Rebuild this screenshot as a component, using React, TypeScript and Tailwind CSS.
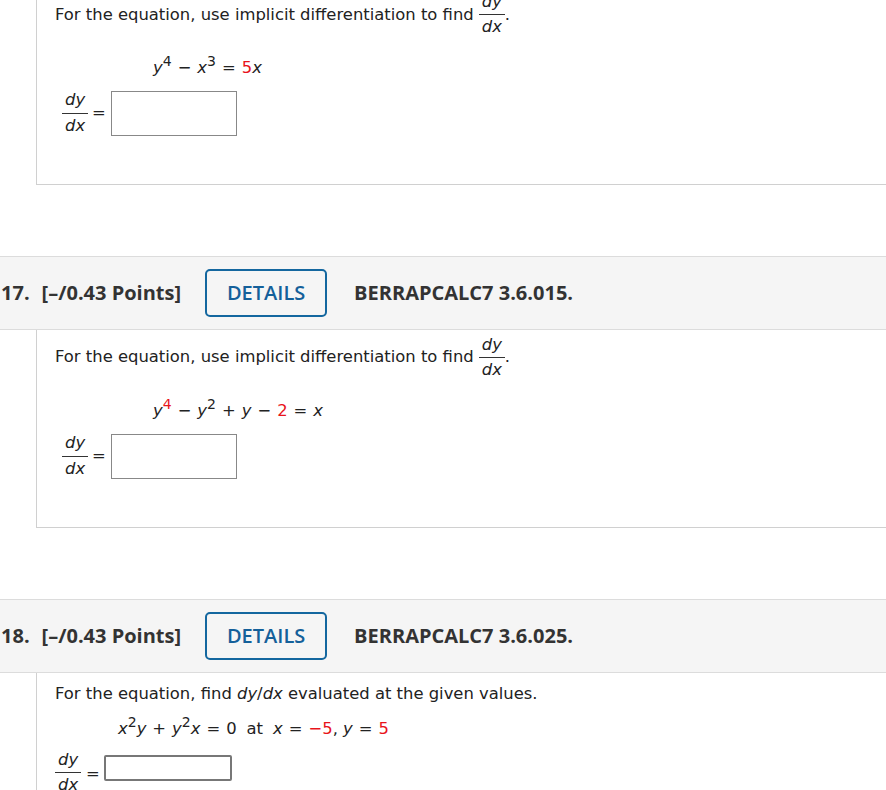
import React from 'react';

const red = 'text-[#e8141b]';

function Frac({ num, den }: { num: string; den: string }) {
  return (
    <span className="inline-flex flex-col items-center align-middle leading-none">
      <span className="px-[3px] pb-[4px] italic">{num}</span>
      <span className="h-px w-full bg-[#333]" />
      <span className="px-[3px] pt-[4px] italic">{den}</span>
    </span>
  );
}

function Op({ children }: { children: React.ReactNode }) {
  return <span className="mx-[6px]">{children}</span>;
}

function Sup({ children, className }: { children: React.ReactNode; className?: string }) {
  return <sup className={'text-[14px] ' + (className ?? '')}>{children}</sup>;
}

function Header({ num, code }: { num: string; code: string }) {
  return (
    <div className="flex h-[74px] items-center border-y border-[#dcdcdc] bg-[#f5f5f5] pl-[1px] font-['Open_Sans',sans-serif] text-[20px] font-bold text-[#333]">
      <span>{num}.</span>
      <span className="ml-[12px]">[–/0.43 Points]</span>
      <button className="ml-[24px] h-[48px] w-[122px] rounded-[5px] border-2 border-[#14679f] bg-transparent font-semibold text-[#14609a]">
        DETAILS
      </button>
      <span className="ml-[27px]">{code}</span>
    </div>
  );
}

function Answer({ small }: { small?: boolean }) {
  return (
    <div className={small ? 'flex items-start' : 'ml-[7px] flex items-center'}>
      <Frac num="dy" den="dx" />
      <span className={small ? 'ml-[5px] mt-[10px]' : 'ml-[4px]'}>=</span>
      {small ? (
        <span className="ml-[4px] mt-[3px] h-[26px] w-[128px] rounded-[2px] border-2 border-[#777] bg-white" />
      ) : (
        <span className="ml-[5px] h-[45px] w-[126px] border border-[#888] bg-white" />
      )}
    </div>
  );
}

function Card({ children, last }: { children: React.ReactNode; last?: boolean }) {
  return (
    <div
      className={
        last
          ? 'ml-[36px] border-l border-[#d0d0d0] pl-[18px] pt-[9px]'
          : 'ml-[36px] border-b border-l border-[#d0d0d0] pb-[48px] pl-[18px] pt-[7px]'
      }
    >
      {children}
    </div>
  );
}

function Intro() {
  return (
    <p className="flex items-center">
      <span>For the equation, use implicit differentiation to find</span>
      <span className="ml-[5px]">
        <Frac num="dy" den="dx" />
      </span>
      <span>.</span>
    </p>
  );
}

export default function App() {
  return (
    <div className="h-[790px] w-[886px] overflow-hidden bg-white font-['DejaVu_Sans',Verdana,sans-serif] text-[16.4px] text-[#222]">
      <div className="-mt-[13px]">
        <Card>
          <Intro />
          <div className="ml-[98px] mt-[20px] leading-[24px]">
            <i>y</i>
            <Sup>4</Sup>
            <Op>−</Op>
            <i>x</i>
            <Sup>3</Sup>
            <Op>=</Op>
            <span className={red}>5</span>
            <i>x</i>
          </div>
          <div className="mt-[11px]">
            <Answer />
          </div>
        </Card>
      </div>

      <div className="mt-[71px]">
        <Header num="17" code="BERRAPCALC7 3.6.015." />
        <Card>
          <Intro />
          <div className="ml-[98px] mt-[20px] leading-[24px]">
            <i>y</i>
            <Sup className={red}>4</Sup>
            <Op>−</Op>
            <i>y</i>
            <Sup>2</Sup>
            <Op>+</Op>
            <i>y</i>
            <Op>−</Op>
            <span className={red}>2</span>
            <Op>=</Op>
            <i>x</i>
          </div>
          <div className="mt-[11px]">
            <Answer />
          </div>
        </Card>
      </div>

      <div className="mt-[71px]">
        <Header num="18" code="BERRAPCALC7 3.6.025." />
        <Card last>
          <p className="leading-[24px]">
            For the equation, find <i>dy</i>/<i>dx</i> evaluated at the given values.
          </p>
          <div className="ml-[63px] mt-[11px] leading-[24px]">
            <i>x</i>
            <Sup>2</Sup>
            <i>y</i>
            <Op>+</Op>
            <i>y</i>
            <Sup>2</Sup>
            <i>x</i>
            <Op>=</Op>
            <span>0</span>
            <span className="mx-[10px]">at</span>
            <i>x</i>
            <Op>=</Op>
            <span className={red}>−5</span>
            <span>, </span>
            <i>y</i>
            <Op>=</Op>
            <span className={red}>5</span>
          </div>
          <div className="mt-[11px]">
            <Answer small />
          </div>
        </Card>
      </div>
    </div>
  );
}
